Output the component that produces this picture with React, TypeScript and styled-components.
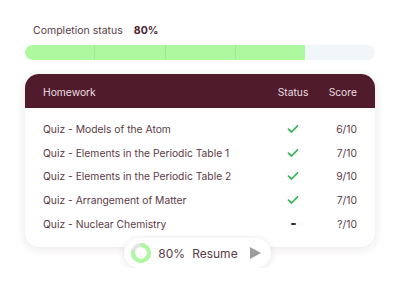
import React from "react";
import styled, { createGlobalStyle } from "styled-components";

const Global = createGlobalStyle`
  html, body { margin: 0; padding: 0; background: #ffffff; }
  body { font-family: Inter, "Noto Sans", sans-serif; }
`;

const Page = styled.div`
  width: 350px;
  padding: 21px 25px 0 25px;
  display: flex;
  flex-direction: column;
`;

const StatusLine = styled.div`
  display: flex;
  align-items: center;
  gap: 11px;
  padding-left: 8px;
  height: 18px;
  font-size: 10.5px;
  color: #5a3b45;
`;

const Percent = styled.span`
  font-weight: 700;
  color: #4f2330;
`;

const Bar = styled.div`
  margin-top: 6px;
  height: 15px;
  border-radius: 8px;
  background: #f1f6fb;
  overflow: hidden;
  display: flex;
`;

const Fill = styled.div`
  height: 100%;
  background: #aef8a0;
  border-radius: 8px 0 0 8px;
  display: flex;
`;

const Segment = styled.div<{ $last?: boolean }>`
  flex: 1;
  border-right: ${(p) => (p.$last ? "none" : "1.5px solid #a0e993")};
`;

const Card = styled.div`
  margin-top: 14px;
  border-radius: 14px;
  background: #ffffff;
  box-shadow: 0 2px 10px rgba(80, 40, 50, 0.12);
  overflow: hidden;
  padding-bottom: 12px;
`;

const Grid = styled.div`
  display: grid;
  grid-template-columns: 1fr 44px 42px;
  align-items: center;
  padding: 0 18px;
`;

const Header = styled(Grid)`
  height: 34px;
  padding-top: 2px;
  box-sizing: border-box;
  background: #501b2a;
  color: #eadfe2;
  font-size: 10.3px;
`;

const Body = styled.div`
  padding-top: 9px;
`;

const Row = styled(Grid)`
  height: 23.7px;
  font-size: 10.3px;
  color: #5a3b45;
`;

const Center = styled.div`
  display: flex;
  justify-content: center;
  align-items: center;
`;

const Right = styled.div`
  text-align: right;
`;

const Dash = styled.div`
  width: 5px;
  height: 2px;
  background: #4a2430;
  border-radius: 1px;
`;

const PillWrap = styled.div`
  display: flex;
  justify-content: center;
  margin-top: -9px;
  padding-right: 5px;
`;

const Pill = styled.div`
  height: 30px;
  border-radius: 15px;
  background: #ffffff;
  box-shadow: 0 1px 6px rgba(80, 40, 50, 0.14);
  display: flex;
  align-items: center;
  padding: 0 10px 0 6px;
  gap: 6px;
  font-size: 12px;
  color: #5a3b45;
`;

const Resume = styled.span`
  margin-left: 1px;
  margin-right: 6px;
`;

const Check = () => (
  <svg width="12" height="10" viewBox="0 0 12 10">
    <path d="M1.5 5.2 L4.6 8 L10.5 1.8" fill="none" stroke="#3db65b" strokeWidth="1.8" strokeLinecap="round" strokeLinejoin="round" />
  </svg>
);

const Donut = () => {
  const r = 8;
  const c = 2 * Math.PI * r;
  return (
    <svg width="22" height="22" viewBox="0 0 22 22">
      <circle cx="11" cy="11" r={r} fill="none" stroke="#e3e3e3" strokeWidth="4" />
      <circle
        cx="11"
        cy="11"
        r={r}
        fill="none"
        stroke="#aef8a0"
        strokeWidth="4"
        strokeDasharray={`${c * 0.8} ${c}`}
        transform="rotate(-90 11 11)"
      />
    </svg>
  );
};

const Play = () => (
  <svg width="11" height="12" viewBox="0 0 11 12">
    <path d="M0 0 L11 6 L0 12 Z" fill="#9c9c9c" />
  </svg>
);

const rows = [
  { name: "Quiz - Models of the Atom", done: true, score: "6/10" },
  { name: "Quiz - Elements in the Periodic Table 1", done: true, score: "7/10" },
  { name: "Quiz - Elements in the Periodic Table 2", done: true, score: "9/10" },
  { name: "Quiz - Arrangement of Matter", done: true, score: "7/10" },
  { name: "Quiz - Nuclear Chemistry", done: false, score: "?/10" },
];

export default function App() {
  return (
    <>
      <Global />
      <Page>
        <StatusLine>
          <span>Completion status</span>
          <Percent>80%</Percent>
        </StatusLine>
        <Bar>
          <Fill style={{ width: "80%" }}>
            <Segment />
            <Segment />
            <Segment />
            <Segment $last />
          </Fill>
        </Bar>
        <Card>
          <Header>
            <div>Homework</div>
            <Center>Status</Center>
            <Right>Score</Right>
          </Header>
          <Body>
            {rows.map((r) => (
              <Row key={r.name}>
                <div>{r.name}</div>
                <Center>{r.done ? <Check /> : <Dash />}</Center>
                <Right>{r.score}</Right>
              </Row>
            ))}
          </Body>
        </Card>
        <PillWrap>
          <Pill>
            <Donut />
            <span>80%</span>
            <Resume>Resume</Resume>
            <Play />
          </Pill>
        </PillWrap>
      </Page>
    </>
  );
}
